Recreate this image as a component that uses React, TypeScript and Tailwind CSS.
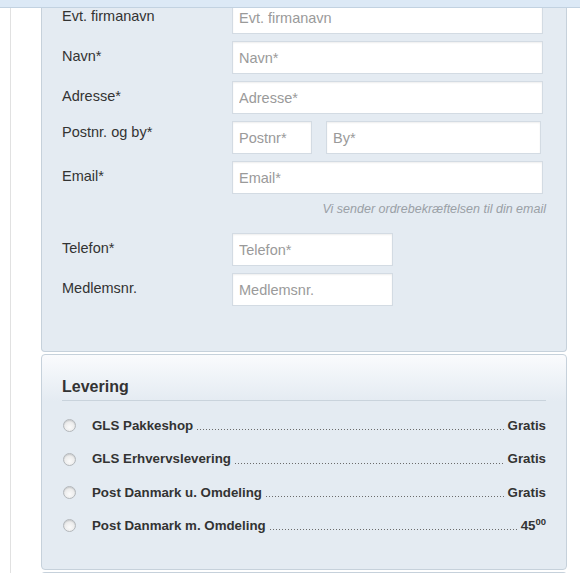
const fields = [
  { label: "Evt. firmanavn", placeholder: "Evt. firmanavn" },
  { label: "Navn*", placeholder: "Navn*" },
  { label: "Adresse*", placeholder: "Adresse*" },
];

const deliveries = [
  { name: "GLS Pakkeshop", price: "Gratis" },
  { name: "GLS Erhvervslevering", price: "Gratis" },
  { name: "Post Danmark u. Omdeling", price: "Gratis" },
  { name: "Post Danmark m. Omdeling", price: "45", cents: "00" },
];

const inputCls =
  "h-[33px] border border-[#d3dbe3] bg-white pl-[6px] text-[14.5px] text-[#555] outline-none shadow-[inset_0_1px_2px_rgba(0,0,0,0.07)] placeholder:text-[#9a9a9a]";

const Field = ({
  label,
  tight,
  children,
}: {
  label: string;
  tight?: boolean;
  children: React.ReactNode;
}) => (
  <div className="flex items-start mb-[7px]">
    <label
      className={`w-[170px] shrink-0 leading-[20px] text-[14.5px] text-[#333] ${tight ? "pt-[1px]" : "pt-[5px]"}`}
    >
      {label}
    </label>
    {children}
  </div>
);

const Radio = () => (
  <span className="ml-[1px] mr-[16px] inline-block w-[13px] h-[13px] shrink-0 rounded-full border border-[#b3b7bb] bg-[radial-gradient(circle_at_50%_65%,#fbfbfb_0%,#ececec_55%,#d4d7da_100%)] shadow-[inset_0_1px_1px_rgba(0,0,0,0.1)]" />
);

export default function App() {
  return (
    <div className="relative h-[573px] overflow-hidden bg-white font-['Liberation_Sans',Arial,sans-serif] text-[#333]">
      <div className="absolute inset-x-0 top-0 z-10 h-[8px] border-b border-[#c2d2e1] bg-[#dce9f6]" />

      <div className="ml-[10px] h-full border-l border-[#e1e1e1] pl-[30px] pr-[13px]">
        {/* customer info */}
        <section className="rounded-b-[4px] border-x border-b border-[#c6d1db] bg-[#e4ebf2] pl-[20px] pr-[20px] pt-[1px] pb-[38px]">
          {fields.map((f) => (
            <Field key={f.label} label={f.label}>
              <input className={`${inputCls} w-[311px]`} placeholder={f.placeholder} />
            </Field>
          ))}
          <Field label="Postnr. og by*" tight>
            <div className="flex gap-[14px]">
              <input className={`${inputCls} w-[80px]`} placeholder="Postnr*" />
              <input className={`${inputCls} w-[215px]`} placeholder="By*" />
            </div>
          </Field>
          <Field label="Email*">
            <input className={`${inputCls} w-[311px]`} placeholder="Email*" />
          </Field>
          <p className="mb-[16px] text-right text-[12.5px] italic leading-[16px] text-[#9aa0a6]">
            Vi sender ordrebekræftelsen til din email
          </p>
          <Field label="Telefon*">
            <input className={`${inputCls} w-[161px]`} placeholder="Telefon*" />
          </Field>
          <Field label="Medlemsnr.">
            <input className={`${inputCls} w-[161px]`} placeholder="Medlemsnr." />
          </Field>
        </section>

        {/* delivery */}
        <section className="mt-[2px] rounded-[4px] border border-[#c6d1db] bg-[linear-gradient(to_bottom,#fafbfd_0px,#e4ebf2_46px)] px-[20px] pt-[22px] pb-[26px]">
          <h2 className="border-b border-[#c9d3dc] pb-[3px] text-[16px] font-bold leading-[20px] text-[#333]">
            Levering
          </h2>
          <ul className="mt-[8px]">
            {deliveries.map((d) => (
              <li key={d.name} className="flex h-[33.4px] items-center text-[13.3px] font-bold text-[#333]">
                <Radio />
                <span>{d.name}</span>
                <span className="mx-[4px] mt-[8px] h-[1px] flex-1 bg-[linear-gradient(to_right,#6b6b6b_1px,transparent_1px)] bg-[length:3px_1px] bg-repeat-x" />
                <span>
                  {d.price}
                  {d.cents && <sup className="relative -top-[5px] text-[9.5px]">{d.cents}</sup>}
                </span>
              </li>
            ))}
          </ul>
        </section>

        <section className="mt-[2px] h-[40px] rounded-t-[4px] border-x border-t border-[#c6d1db] bg-[#f3f6f9]" />
      </div>
    </div>
  );
}
